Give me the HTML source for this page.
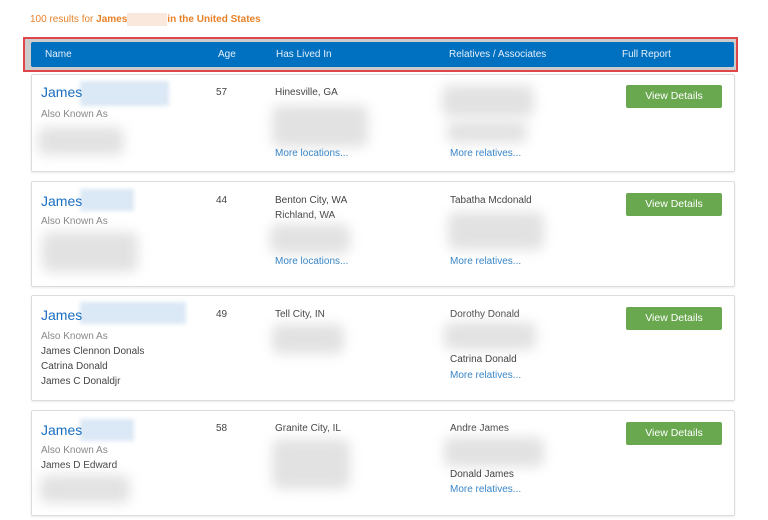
<!DOCTYPE html>
<html><head><style>
body{margin:0;width:768px;height:520px;background:#fff;font-family:"Liberation Sans",sans-serif;position:relative;overflow:hidden;font-size:10px;color:#444}
.a{position:absolute;white-space:nowrap}
.card{position:absolute;left:31px;width:702px;border:1px solid #dcdcdc;border-radius:2px;background:#fff;box-shadow:0 1px 2px rgba(0,0,0,.08)}
.nm{color:#1a6fc0;font-size:14px}
.lk{color:#3a87c8}
.gr{color:#888}
.bl{position:absolute;background:#e2e2e2;filter:blur(6px);border-radius:8px}
.bb{position:absolute;background:#dbe8f5;filter:blur(2px)}
.btn{position:absolute;left:594px;width:96px;height:23px;background:#6aa84f;border-radius:2px;color:#fff;text-align:center;line-height:23px;font-size:10.5px}
</style></head><body>
<div class="a" style="left:30px;top:13px;color:#e8822a;font-size:10px">100 results for <b>James</b><span style="display:inline-block;width:40px;height:13px;background:#fbe8dc;vertical-align:middle"></span><b>in the United States</b></div>
<div class="a" style="left:23px;top:37px;width:711px;height:31px;border:2px solid #e0454a;background:#ccc"></div>
<div class="a" style="left:31px;top:42px;width:703px;height:25px;background:#0070c0;color:#e6f0fa;font-size:10px;border-radius:2px">
<span class="a" style="left:14px;top:7px">Name</span><span class="a" style="left:187px;top:7px">Age</span><span class="a" style="left:245px;top:7px">Has Lived In</span><span class="a" style="left:418px;top:7px">Relatives / Associates</span><span class="a" style="left:591px;top:7px">Full Report</span></div>

<div class="card" style="top:74px;height:96px">
<div class="bb" style="left:48px;top:6px;width:89px;height:25px"></div>
<span class="a nm" style="left:9px;top:9px">James</span>
<span class="a gr" style="left:9px;top:34px">Also Known As</span>
<div class="bl" style="left:6px;top:52px;width:86px;height:28px"></div>
<span class="a" style="left:184px;top:12px">57</span>
<span class="a" style="left:243px;top:12px">Hinesville, GA</span>
<div class="bl" style="left:240px;top:30px;width:96px;height:42px"></div>
<span class="a lk" style="left:243px;top:73px">More locations...</span>
<div class="bl" style="left:410px;top:10px;width:92px;height:32px"></div>
<div class="bl" style="left:415px;top:46px;width:80px;height:22px"></div>
<span class="a lk" style="left:418px;top:73px">More relatives...</span>
<div class="btn" style="top:10px">View Details</div>
</div>

<div class="card" style="top:181px;height:104px">
<div class="bb" style="left:48px;top:7px;width:54px;height:22px"></div>
<span class="a nm" style="left:9px;top:11px">James</span>
<span class="a gr" style="left:9px;top:34px">Also Known As</span>
<div class="bl" style="left:10px;top:50px;width:96px;height:40px"></div>
<span class="a" style="left:184px;top:13px">44</span>
<span class="a" style="left:243px;top:13px">Benton City, WA</span>
<span class="a" style="left:243px;top:28px">Richland, WA</span>
<div class="bl" style="left:238px;top:42px;width:80px;height:30px"></div>
<span class="a lk" style="left:243px;top:74px">More locations...</span>
<span class="a" style="left:418px;top:13px">Tabatha Mcdonald</span>
<div class="bl" style="left:416px;top:30px;width:96px;height:38px"></div>
<span class="a lk" style="left:418px;top:74px">More relatives...</span>
<div class="btn" style="top:11px">View Details</div>
</div>

<div class="card" style="top:295px;height:104px">
<div class="bb" style="left:48px;top:6px;width:106px;height:22px"></div>
<span class="a nm" style="left:9px;top:11px">James</span>
<span class="a gr" style="left:9px;top:35px">Also Known As</span>
<span class="a" style="left:9px;top:50px">James Clennon Donals</span>
<span class="a" style="left:9px;top:65px">Catrina Donald</span>
<span class="a" style="left:9px;top:80px">James C Donaldjr</span>
<span class="a" style="left:184px;top:13px">49</span>
<span class="a" style="left:243px;top:13px">Tell City, IN</span>
<div class="bl" style="left:240px;top:28px;width:72px;height:30px"></div>
<span class="a" style="left:418px;top:13px">Dorothy Donald</span>
<div class="bl" style="left:412px;top:26px;width:92px;height:28px"></div>
<span class="a" style="left:418px;top:58px">Catrina Donald</span>
<span class="a lk" style="left:418px;top:74px">More relatives...</span>
<div class="btn" style="top:11px">View Details</div>
</div>

<div class="card" style="top:410px;height:104px">
<div class="bb" style="left:48px;top:8px;width:54px;height:22px"></div>
<span class="a nm" style="left:9px;top:11px">James</span>
<span class="a gr" style="left:9px;top:34px">Also Known As</span>
<span class="a" style="left:9px;top:49px">James D Edward</span>
<div class="bl" style="left:8px;top:64px;width:90px;height:28px"></div>
<span class="a" style="left:184px;top:12px">58</span>
<span class="a" style="left:243px;top:12px">Granite City, IL</span>
<div class="bl" style="left:240px;top:28px;width:78px;height:50px"></div>
<span class="a" style="left:418px;top:12px">Andre James</span>
<div class="bl" style="left:412px;top:26px;width:100px;height:30px"></div>
<span class="a" style="left:418px;top:58px">Donald James</span>
<span class="a lk" style="left:418px;top:73px">More relatives...</span>
<div class="btn" style="top:11px">View Details</div>
</div>
</body></html>
